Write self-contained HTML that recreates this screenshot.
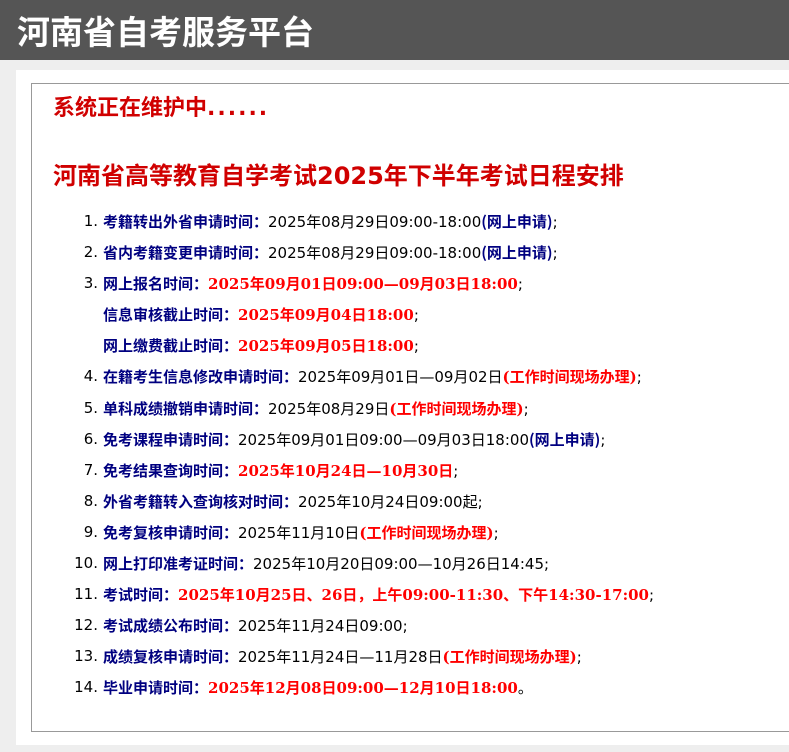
<!DOCTYPE html>
<html><head><meta charset="utf-8"><style>
*{margin:0;padding:0;box-sizing:border-box}
body{width:789px;height:752px;background:#eeeeee;font-family:"DejaVu Sans","Noto Sans CJK SC",sans-serif;overflow:hidden;position:relative}
.hd{height:60px;background:#555;color:#fff;font-family:"Noto Sans CJK SC",sans-serif;font-weight:bold;font-size:33px;line-height:60px;padding-left:17px}
.panel{position:absolute;left:16px;top:70px;width:780px;height:675px;background:#fff}
.box{position:absolute;left:15px;top:13px;width:770px;height:649px;border:1px solid #999;border-right:none}
h1{position:absolute;left:21px;top:6px;font-size:22px;color:#d00000;font-family:"Noto Sans CJK SC",sans-serif;font-weight:bold;line-height:32px;white-space:nowrap}
h1 span{letter-spacing:2px;font-family:"DejaVu Sans",sans-serif}
h2{position:absolute;left:21px;top:74px;font-size:24px;color:#d00000;font-family:"DejaVu Sans","Noto Sans CJK SC",sans-serif;font-weight:bold;line-height:36px;white-space:nowrap}
.l{position:absolute;left:0;top:122px;font-size:15px;line-height:31px;white-space:nowrap}
.r{display:block;height:31.1px;position:relative}
.n{position:absolute;left:15px;width:51px;text-align:right}
.t{position:absolute;left:71px}
b.k{color:#000080;font-family:"Noto Sans CJK SC",sans-serif}
b.h{color:#ff0000;font-family:"DejaVu Serif","Noto Sans CJK SC",serif}
</style></head><body>
<div class="hd">河南省自考服务平台</div>
<div class="panel"><div class="box">
<h1>系统正在维护中<span>......</span></h1>
<h2>河南省高等教育自学考试2025年下半年考试日程安排</h2>
<div class="l">
<div class="r"><span class="n">1.</span><span class="t"><b class="k">考籍转出外省申请时间：</b>2025年08月29日09:00-18:00<b class="k">(网上申请)</b>;</span></div>
<div class="r"><span class="n">2.</span><span class="t"><b class="k">省内考籍变更申请时间：</b>2025年08月29日09:00-18:00<b class="k">(网上申请)</b>;</span></div>
<div class="r"><span class="n">3.</span><span class="t"><b class="k">网上报名时间：</b><b class="h">2025年09月01日09:00—09月03日18:00</b>;</span></div>
<div class="r"><span class="t"><b class="k">信息审核截止时间：</b><b class="h">2025年09月04日18:00</b>;</span></div>
<div class="r"><span class="t"><b class="k">网上缴费截止时间：</b><b class="h">2025年09月05日18:00</b>;</span></div>
<div class="r"><span class="n">4.</span><span class="t"><b class="k">在籍考生信息修改申请时间：</b>2025年09月01日—09月02日<b class="h">(工作时间现场办理)</b>;</span></div>
<div class="r"><span class="n">5.</span><span class="t"><b class="k">单科成绩撤销申请时间：</b>2025年08月29日<b class="h">(工作时间现场办理)</b>;</span></div>
<div class="r"><span class="n">6.</span><span class="t"><b class="k">免考课程申请时间：</b>2025年09月01日09:00—09月03日18:00<b class="k">(网上申请)</b>;</span></div>
<div class="r"><span class="n">7.</span><span class="t"><b class="k">免考结果查询时间：</b><b class="h">2025年10月24日—10月30日</b>;</span></div>
<div class="r"><span class="n">8.</span><span class="t"><b class="k">外省考籍转入查询核对时间：</b>2025年10月24日09:00起;</span></div>
<div class="r"><span class="n">9.</span><span class="t"><b class="k">免考复核申请时间：</b>2025年11月10日<b class="h">(工作时间现场办理)</b>;</span></div>
<div class="r"><span class="n">10.</span><span class="t"><b class="k">网上打印准考证时间：</b>2025年10月20日09:00—10月26日14:45;</span></div>
<div class="r"><span class="n">11.</span><span class="t"><b class="k">考试时间：</b><b class="h">2025年10月25日、26日，上午09:00-11:30、下午14:30-17:00</b>;</span></div>
<div class="r"><span class="n">12.</span><span class="t"><b class="k">考试成绩公布时间：</b>2025年11月24日09:00;</span></div>
<div class="r"><span class="n">13.</span><span class="t"><b class="k">成绩复核申请时间：</b>2025年11月24日—11月28日<b class="h">(工作时间现场办理)</b>;</span></div>
<div class="r"><span class="n">14.</span><span class="t"><b class="k">毕业申请时间：</b><b class="h">2025年12月08日09:00—12月10日18:00</b>。</span></div>
</div>
</div></div>
</body></html>
